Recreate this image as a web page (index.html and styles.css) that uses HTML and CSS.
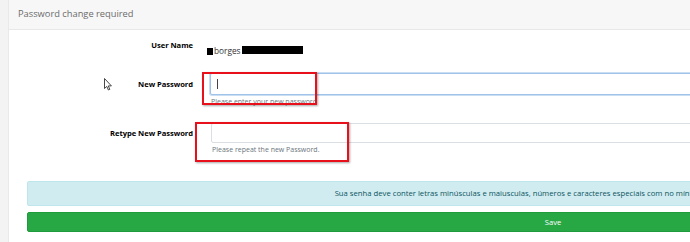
FILE: index.html
```html
<!DOCTYPE html>
<html lang="en">
<head>
	<meta charset="UTF-8">
	<title>Password change required</title>
	<link rel="stylesheet" href="styles.css">
</head>
<body>
	<div class="card">
		<div class="card-header">Password change required</div>
		<div class="card-body">
			<!-- user -->
			<div class="row row-user">
				<label class="label">User Name</label>
				<div class="field">
					<span class="value"><i class="redact redact-a"></i>borges<i class="redact redact-b"></i></span>
				</div>
			</div>

			<!-- new password -->
			<div class="row row-new">
				<label class="label">New Password</label>
				<div class="field">
					<div class="input input-focus"><span class="caret"></span></div>
					<div class="help">Please enter your new password</div>
				</div>
			</div>

			<!-- retype -->
			<div class="row row-retype">
				<label class="label">Retype New Password</label>
				<div class="field">
					<div class="input"></div>
					<div class="help">Please repeat the new Password.</div>
				</div>
			</div>

			<div class="alert">Sua senha deve conter letras minúsculas e maiusculas, números e caracteres especiais com no mínimo 8 (oito) caracteres.</div>
			<button class="btn-save">Save</button>

			<!-- marks drawn over the screenshot -->
			<div class="mark mark-1"></div>
			<div class="mark mark-2"></div>
			<svg class="pointer" width="8" height="13" viewBox="0 0 8 13">
				<path d="M0.5 0.5 L0.5 10.5 L2.8 8.4 L4.4 12 L5.8 11.4 L4.3 7.9 L7.4 7.9 Z" fill="#fff" stroke="#333" stroke-width="0.9" stroke-linejoin="round"/>
			</svg>
		</div>
	</div>
</body>
</html>
```

FILE: styles.css
```css
*{margin:0;padding:0;box-sizing:border-box;}
body{background:#f3f3f3;overflow:hidden;font-family:"Open Sans","Noto Sans",sans-serif;}

/*卡片*/
.card{margin-left:8px;width:1089px;height:260px;background:#fff;border-left:1px solid #e9e9e9;}
.card-header{height:30px;line-height:28px;padding-left:9px;background:#f7f7f7;border-bottom:1px solid #e8e8e8;font-size:9.3px;color:#6b6b6b;}
.card-body{padding:8px 18px 0;position:relative;}

/*表单行*/
.row{display:flex;align-items:flex-start;}
.label{width:166px;flex:none;text-align:right;font-size:7.6px;font-weight:700;color:#000;letter-spacing:-0.05px;}
.field{margin-left:17px;flex:1;}
.row-user{height:14px;}
.row-user .label{line-height:14px;}
.value{display:inline-flex;align-items:center;height:14px;font-size:8.3px;color:#333;margin-left:-3px;}
.redact{display:inline-block;background:#000;}
.redact-a{width:6px;height:7px;margin-right:1px;margin-top:3px;}
.redact-b{width:61px;height:8px;margin-left:1px;}

.row-new{margin-top:21px;}
.row-new .label{line-height:22px;}
.row-retype{margin-top:17px;}
.row-retype .label{line-height:20px;}
.row-retype .field{margin-left:18px;}

.input{height:20px;border:1px solid #dadfe3;border-radius:2px;background:#fff;position:relative;}
.input-focus{height:22px;border:1px solid #9fc3e9;box-shadow:0 0 0 1px #c9ddf3;}
.caret{position:absolute;left:6px;top:5px;width:1px;height:10px;background:#444;}
.help{font-size:7px;color:#6c757d;margin-top:2px;margin-left:1px;line-height:9px;}

/*提示*/
.alert{margin-top:27px;height:25px;line-height:23px;background:#d1ecf1;border:1px solid #bee5eb;border-radius:2px;color:#0c5460;font-size:7.7px;text-align:center;}
.btn-save{display:block;width:100%;margin-top:6px;height:20px;background:#28a745;border:1px solid #1f9a3c;border-radius:2px;color:#fff;font-family:inherit;font-size:7.6px;}

/*标记*/
.mark{position:absolute;border:2px solid #e8101b;box-shadow:1px 1px 2px rgba(0,0,0,.35);}
.mark-1{left:193px;top:42px;width:115px;height:33px;}
.mark-2{left:186px;top:92px;width:154px;height:40px;}
.pointer{position:absolute;left:95px;top:48px;}
```
